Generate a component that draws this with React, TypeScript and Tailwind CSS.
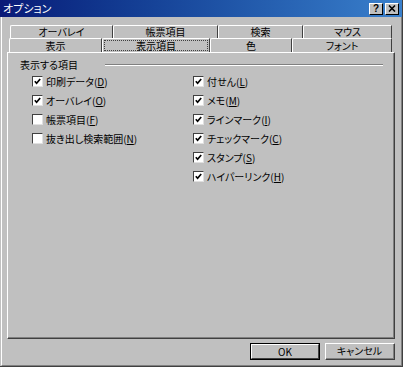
import React from "react";

const FONT = "[font-family:'Noto_Sans_CJK_JP',sans-serif] [font-feature-settings:'palt']";

function Check({ checked }: { checked: boolean }) {
  return (
    <div className="w-[11px] h-[11px] bg-white border-t border-l border-t-[#404040] border-l-[#404040] border-r border-b border-r-[#e0e0e0] border-b-[#e0e0e0] flex items-center justify-center shrink-0">
      {checked && (
        <svg width="7" height="7" viewBox="0 0 7 7">
          <path d="M0.8 3.2 L2.6 5.2 L6.2 1" fill="none" stroke="#000" strokeWidth="1.7" />
        </svg>
      )}
    </div>
  );
}

function Item({ label, mn, checked }: { label: string; mn: string; checked: boolean }) {
  return (
    <div className="h-[19px] flex items-center gap-[3px]">
      <Check checked={checked} />
      <span className="text-[10px] leading-none text-black whitespace-nowrap">
        {label}(<u>{mn}</u>)
      </span>
    </div>
  );
}

function Tab({ label, w, h, selected }: { label: string; w: string; h: string; selected?: boolean }) {
  return (
    <div
      className={`${w} ${h} shrink-0 bg-[#c0c0c0] border-t border-l border-white border-r border-r-[#404040] rounded-tl-[2px] flex items-center justify-center`}
    >
      {selected ? (
        <div className="w-full mx-[1px] h-[11px] border border-dotted border-[#404040] flex items-center justify-center">
          <span className="text-[10px] leading-none text-black">{label}</span>
        </div>
      ) : (
        <span className="text-[10px] leading-none text-black">{label}</span>
      )}
    </div>
  );
}

function Btn({ children, def }: { children: React.ReactNode; def?: boolean }) {
  return (
    <div
      className={`w-[70px] h-[17px] bg-[#c0c0c0] border ${def ? "border-[#000]" : "border-t-white border-l-white border-r-[#404040] border-b-[#404040]"} flex items-center justify-center`}
    >
      <div
        className={`w-full h-full flex items-center justify-center ${def ? "border-t border-l border-white border-r border-b border-r-[#404040] border-b-[#404040]" : "border-r border-b border-[#808080]"}`}
      >
        <span className="text-[10px] leading-none text-black">{children}</span>
      </div>
    </div>
  );
}

export default function App() {
  const left: [string, string, boolean][] = [
    ["印刷データ", "D", true],
    ["オーバレイ", "O", true],
    ["帳票項目", "F", false],
    ["抜き出し検索範囲", "N", false],
  ];
  const right: [string, string, boolean][] = [
    ["付せん", "L", true],
    ["メモ", "M", true],
    ["ラインマーク", "I", true],
    ["チェックマーク", "C", true],
    ["スタンプ", "S", true],
    ["ハイパーリンク", "H", true],
  ];
  return (
    <div className={`w-[415px] h-[378px] bg-white ${FONT}`}>
      <div className="w-[403px] h-[367px] bg-[#c0c0c0] flex flex-col border-r border-b border-[#404040]">
        {/* title bar */}
        <div className="h-[17px] shrink-0 bg-gradient-to-r from-[#0a1a78] to-[#3a80cc] flex items-center pl-[3px] pr-[3px]">
          <span className="text-[11px] leading-none text-white">オプション</span>
          <div className="ml-auto flex gap-[2px]">
            <div className="w-[14px] h-[12px] bg-[#c0c0c0] border-t border-l border-white border-r border-b border-r-[#000] border-b-[#000] flex items-center justify-center">
              <span className="[font-family:'Liberation_Sans',sans-serif] text-[10px] font-bold leading-none text-black">?</span>
            </div>
            <div className="w-[14px] h-[12px] bg-[#c0c0c0] border-t border-l border-white border-r border-b border-r-[#000] border-b-[#000] flex items-center justify-center">
              <svg width="8" height="7" viewBox="0 0 8 7">
                <path d="M1 0.5 L7 6.5 M7 0.5 L1 6.5" stroke="#000" strokeWidth="1.6" />
              </svg>
            </div>
          </div>
        </div>
        {/* body */}
        <div className="flex-1 ml-px border-l border-white border-r border-b border-r-[#808080] border-b-[#808080] flex flex-col pl-[5px] pr-[6px] pt-[8px]">
          {/* tab row 1 */}
          <div className="flex pl-[3px]">
            <Tab label="オーバレイ" w="w-[103px]" h="h-[13px]" />
            <Tab label="帳票項目" w="w-[105px]" h="h-[13px]" />
            <Tab label="検索" w="w-[85px]" h="h-[13px]" />
            <Tab label="マウス" w="w-[89px]" h="h-[13px]" />
          </div>
          {/* tab row 2 */}
          <div className="flex pl-[2px] h-[14px] items-end">
            <Tab label="表示" w="w-[93px]" h="h-[14px]" />
            <Tab label="表示項目" w="w-[108px]" h="h-[14px]" selected />
            <Tab label="色" w="w-[82px]" h="h-[14px]" />
            <Tab label="フォント" w="w-[100px]" h="h-[14px]" />
          </div>
          {/* panel */}
          <div className="h-[287px] border-t border-l border-white border-r border-b border-r-[#404040] border-b-[#404040]">
            <div className="h-full border-r border-b border-[#808080] flex flex-col">
              <div className="h-[12px] mt-[6px] flex items-center pl-[12px]">
                <span className="text-[10px] leading-none text-black whitespace-nowrap">表示する項目</span>
                <div className="ml-[27px] w-[278px] border-t border-t-[#808080] border-b border-b-white" />
              </div>
              <div className="mt-[1px] flex pl-[24px]">
                <div className="w-[161px] flex flex-col">
                  {left.map(([l, m, c]) => (
                    <Item key={l} label={l} mn={m} checked={c} />
                  ))}
                </div>
                <div className="flex flex-col">
                  {right.map(([l, m, c]) => (
                    <Item key={l} label={l} mn={m} checked={c} />
                  ))}
                </div>
              </div>
            </div>
          </div>
          {/* buttons */}
          <div className="mt-[4px] flex justify-end gap-[5px]">
            <Btn def>OK</Btn>
            <Btn>キャンセル</Btn>
          </div>
        </div>
      </div>
    </div>
  );
}
